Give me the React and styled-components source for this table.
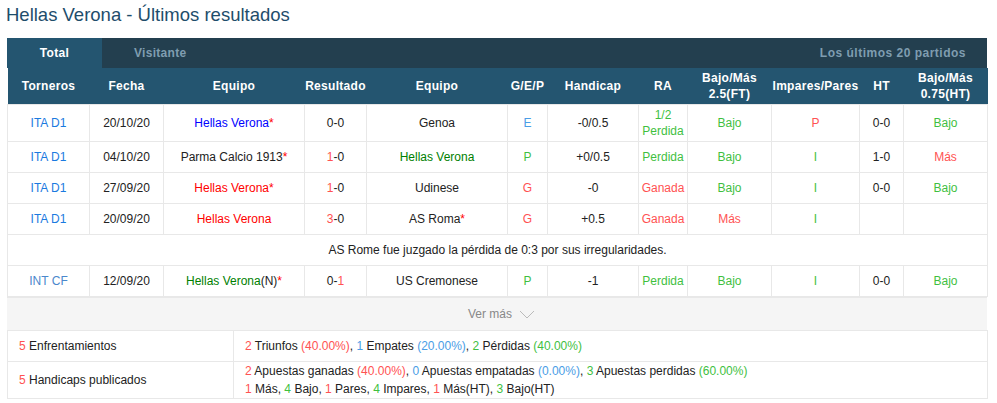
import React from "react";
import styled, { createGlobalStyle } from "styled-components";

const Global = createGlobalStyle`
  body {
    margin: 0;
    background: #fff;
    font-family: "Liberation Sans", Arial, sans-serif;
    font-size: 12px;
    color: #222;
  }
`;

const TONES = {
  red: "#ff0000",
  soft: "#ff5252",
  green: "#3fbf3f",
  dark: "#008000",
  blue: "#0000ff",
  link: "#1a7ae0",
  link2: "#4b88cc",
  sky: "#4a9de6",
  ink: "#222",
};

const Page = styled.div`
  padding: 0 10px 0 7px;
  width: 980px;
`;

const Title = styled.h1`
  margin: 0 0 0 -1px;
  padding-top: 3px;
  height: 35px;
  font-size: 18.5px;
  font-weight: normal;
  line-height: 24px;
  color: #1e4d6b;
`;

const TabBar = styled.div`
  display: flex;
  align-items: center;
  height: 30px;
  background: #233f4f;
  letter-spacing: 0.3px;
`;

const Tab = styled.div`
  height: 100%;
  display: flex;
  align-items: center;
  justify-content: center;
  box-sizing: border-box;
  width: ${(p) => (p.$active ? "95px" : "auto")};
  padding: 0 ${(p) => (p.$active ? "0" : "32px")};
  font-weight: bold;
  color: ${(p) => (p.$active ? "#fff" : "#7f9db0")};
  background: ${(p) => (p.$active ? "#245570" : "transparent")};
`;

const TabNote = styled.div`
  margin-left: auto;
  padding-right: 21px;
  font-weight: bold;
  color: #7f9db0;
  letter-spacing: 0.5px;
`;

const Table = styled.table`
  width: 980px;
  border-collapse: collapse;
  table-layout: fixed;
`;

const Head = styled.th`
  background: #245570;
  color: #fff;
  font-weight: bold;
  height: 36px;
  padding: 0;
  line-height: 16px;
  text-align: center;
  letter-spacing: 0.3px;
`;

const Row = styled.tr`
  height: ${(p) => (p.$tall ? "37px" : "31px")};
`;

const Cell = styled.td`
  border: 1px solid #e8e8e8;
  padding: 0;
  text-align: center;
  line-height: 16px;
  color: ${(p) => TONES[p.$tone || "ink"]};
`;

const Tone = styled.span`
  color: ${(p) => TONES[p.$tone]};
`;

const MoreRow = styled.div`
  height: 32px;
  background: #f5f5f5;
  border-top: 1px solid #e8e8e8;
  display: flex;
  align-items: center;
  justify-content: center;
  gap: 7px;
  color: #888;
  padding-left: 9px;
`;

const Summary = styled.table`
  width: 980px;
  border-collapse: collapse;
  table-layout: fixed;
`;

const SumRow = styled.tr`
  height: ${(p) => (p.$tall ? "37px" : "31px")};
`;

const SumCell = styled.td`
  border: 1px solid #e8e8e8;
  padding: 0 11px;
  line-height: 18px;
`;

const Chevron = () => (
  <svg width="16" height="9" viewBox="0 0 16 9">
    <polyline points="1,1 8,8 15,1" fill="none" stroke="#bbb" strokeWidth="1" />
  </svg>
);

const widths = [82, 74, 141, 62, 141, 40, 91, 49, 84, 88, 44, 84];

const Star = () => <Tone $tone="red">*</Tone>;

const rows = [
  {
    lg: "ITA D1", lt: "link", date: "20/10/20",
    home: <><Tone $tone="blue">Hellas Verona</Tone><Star /></>,
    score: <>0-0</>, away: <>Genoa</>,
    res: ["E", "sky"], hc: "-0/0.5", ra: [<>1/2<br />Perdida</>, "green"],
    ou: ["Bajo", "green"], oe: ["P", "soft"], ht: "0-0", ouh: ["Bajo", "green"], tall: true,
  },
  {
    lg: "ITA D1", lt: "link", date: "04/10/20",
    home: <>Parma Calcio 1913<Star /></>,
    score: <><Tone $tone="soft">1</Tone>-0</>, away: <Tone $tone="dark">Hellas Verona</Tone>,
    res: ["P", "green"], hc: "+0/0.5", ra: ["Perdida", "green"],
    ou: ["Bajo", "green"], oe: ["I", "green"], ht: "1-0", ouh: ["Más", "soft"],
  },
  {
    lg: "ITA D1", lt: "link", date: "27/09/20",
    home: <><Tone $tone="red">Hellas Verona</Tone><Star /></>,
    score: <><Tone $tone="soft">1</Tone>-0</>, away: <>Udinese</>,
    res: ["G", "soft"], hc: "-0", ra: ["Ganada", "soft"],
    ou: ["Bajo", "green"], oe: ["I", "green"], ht: "0-0", ouh: ["Bajo", "green"],
  },
  {
    lg: "ITA D1", lt: "link", date: "20/09/20",
    home: <Tone $tone="red">Hellas Verona</Tone>,
    score: <><Tone $tone="soft">3</Tone>-0</>, away: <>AS Roma<Star /></>,
    res: ["G", "soft"], hc: "+0.5", ra: ["Ganada", "soft"],
    ou: ["Más", "soft"], oe: ["I", "green"], ht: "", ouh: ["", "ink"], note: true,
  },
  {
    lg: "INT CF", lt: "link2", date: "12/09/20",
    home: <><Tone $tone="dark">Hellas Verona</Tone>(N)<Star /></>,
    score: <>0-<Tone $tone="soft">1</Tone></>, away: <>US Cremonese</>,
    res: ["P", "green"], hc: "-1", ra: ["Perdida", "green"],
    ou: ["Bajo", "green"], oe: ["I", "green"], ht: "0-0", ouh: ["Bajo", "green"],
  },
];

const MatchRow = ({ r }) => (
  <Row $tall={r.tall}>
    <Cell $tone={r.lt}>{r.lg}</Cell>
    <Cell>{r.date}</Cell>
    <Cell>{r.home}</Cell>
    <Cell $tone="ink">{r.score}</Cell>
    <Cell>{r.away}</Cell>
    <Cell $tone={r.res[1]}>{r.res[0]}</Cell>
    <Cell>{r.hc}</Cell>
    <Cell $tone={r.ra[1]}>{r.ra[0]}</Cell>
    <Cell $tone={r.ou[1]}>{r.ou[0]}</Cell>
    <Cell $tone={r.oe[1]}>{r.oe[0]}</Cell>
    <Cell>{r.ht}</Cell>
    <Cell $tone={r.ouh[1]}>{r.ouh[0]}</Cell>
  </Row>
);

export default function App() {
  return (
    <Page>
      <Global />
      <Title>Hellas Verona - Últimos resultados</Title>
      <TabBar>
        <Tab $active>Total</Tab>
        <Tab>Visitante</Tab>
        <TabNote>Los últimos 20 partidos</TabNote>
      </TabBar>
      <Table>
        <colgroup>
          {widths.map((w, i) => (
            <col key={i} style={{ width: w }} />
          ))}
        </colgroup>
        <thead>
          <tr>
            <Head>Torneros</Head>
            <Head>Fecha</Head>
            <Head>Equipo</Head>
            <Head>Resultado</Head>
            <Head>Equipo</Head>
            <Head>G/E/P</Head>
            <Head>Handicap</Head>
            <Head>RA</Head>
            <Head>Bajo/Más<br />2.5(FT)</Head>
            <Head>Impares/Pares</Head>
            <Head>HT</Head>
            <Head>Bajo/Más<br />0.75(HT)</Head>
          </tr>
        </thead>
        <tbody>
          {rows.map((r, i) => (
            <React.Fragment key={i}>
              <MatchRow r={r} />
              {r.note && (
                <Row>
                  <Cell colSpan={12}>
                    AS Rome fue juzgado la pérdida de 0:3 por sus irregularidades.
                  </Cell>
                </Row>
              )}
            </React.Fragment>
          ))}
        </tbody>
      </Table>
      <MoreRow>
        Ver más <Chevron />
      </MoreRow>
      <Summary>
        <colgroup>
          <col style={{ width: 226 }} />
          <col style={{ width: 754 }} />
        </colgroup>
        <tbody>
          <SumRow>
            <SumCell><Tone $tone="soft">5</Tone> Enfrentamientos</SumCell>
            <SumCell>
              <Tone $tone="soft">2</Tone> Triunfos <Tone $tone="soft">(40.00%)</Tone>,{" "}
              <Tone $tone="sky">1</Tone> Empates <Tone $tone="sky">(20.00%)</Tone>,{" "}
              <Tone $tone="green">2</Tone> Pérdidas <Tone $tone="green">(40.00%)</Tone>
            </SumCell>
          </SumRow>
          <SumRow $tall>
            <SumCell><Tone $tone="soft">5</Tone> Handicaps publicados</SumCell>
            <SumCell>
              <Tone $tone="soft">2</Tone> Apuestas ganadas <Tone $tone="soft">(40.00%)</Tone>,{" "}
              <Tone $tone="sky">0</Tone> Apuestas empatadas <Tone $tone="sky">(0.00%)</Tone>,{" "}
              <Tone $tone="green">3</Tone> Apuestas perdidas <Tone $tone="green">(60.00%)</Tone>
              <br />
              <Tone $tone="soft">1</Tone> Más, <Tone $tone="green">4</Tone> Bajo,{" "}
              <Tone $tone="soft">1</Tone> Pares, <Tone $tone="green">4</Tone> Impares,{" "}
              <Tone $tone="soft">1</Tone> Más(HT), <Tone $tone="green">3</Tone> Bajo(HT)
            </SumCell>
          </SumRow>
        </tbody>
      </Summary>
    </Page>
  );
}
